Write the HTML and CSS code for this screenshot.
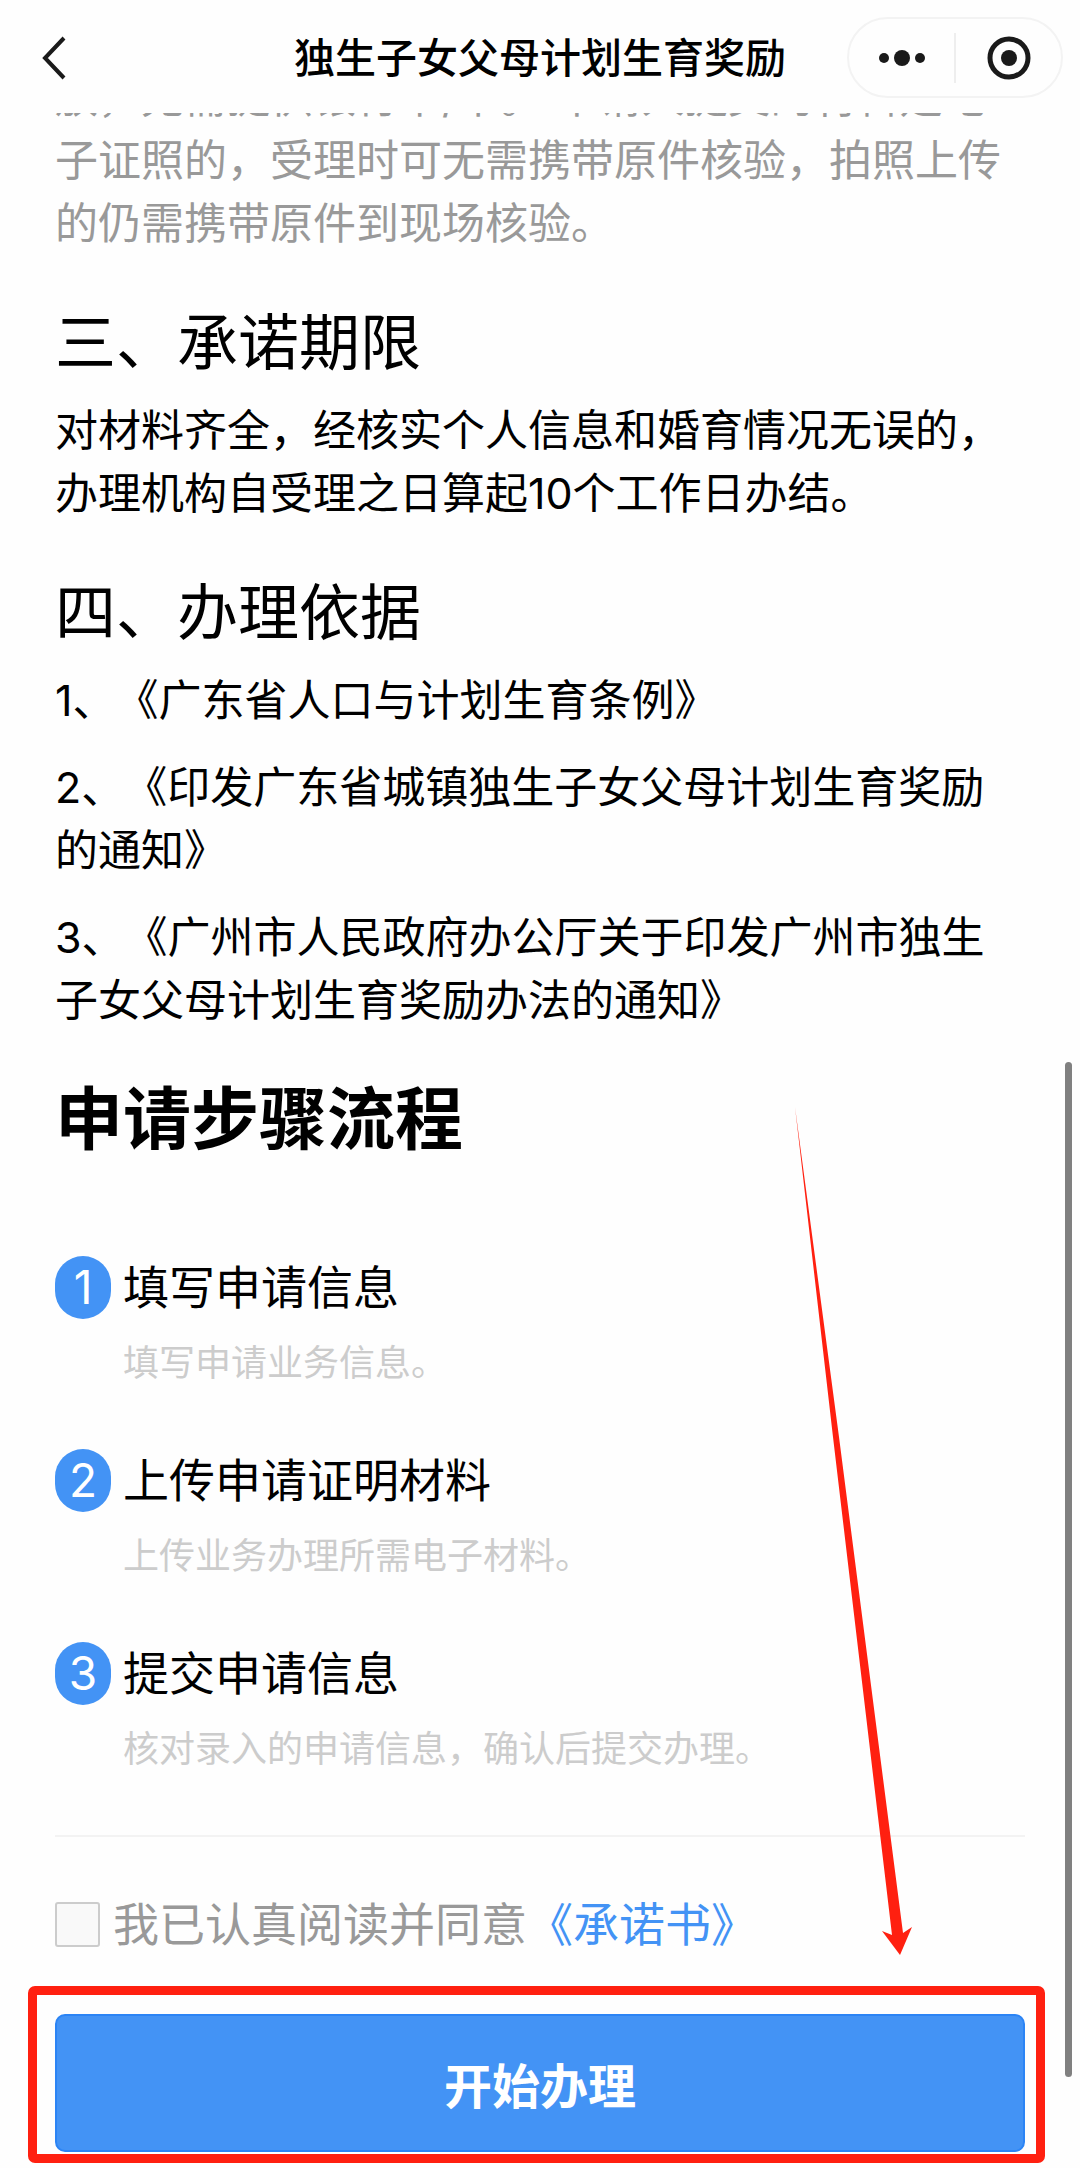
FILE: index.html
```html
<!DOCTYPE html>
<html lang="zh-CN">
<head>
    <meta charset="UTF-8">
    <meta name="viewport" content="width=device-width, initial-scale=1.0">
    <title>独生子女父母计划生育奖励</title>
    <link rel="stylesheet" href="styles.css">
</head>
<body>
    <header class="navbar">
        <button class="back" type="button" aria-label="返回">
            <svg width="24" height="44" viewBox="0 0 24 44" fill="none" stroke="#1a1a1a" stroke-width="4">
                <path d="M22 2L3 22L22 42"/>
            </svg>
        </button>
        <h1 class="navbar-title">独生子女父母计划生育奖励</h1>
        <div class="capsule">
            <button type="button" aria-label="更多">
                <svg width="48" height="44" viewBox="0 0 48 44" fill="#1a1a1a">
                    <circle cx="6" cy="22" r="5"/>
                    <circle cx="24" cy="22" r="8"/>
                    <circle cx="42" cy="22" r="5"/>
                </svg>
            </button>
            <span class="capsule-line"></span>
            <button type="button" aria-label="关闭">
                <svg width="44" height="44" viewBox="0 0 44 44">
                    <circle cx="22" cy="22" r="19" fill="none" stroke="#1a1a1a" stroke-width="5"/>
                    <circle cx="22" cy="22" r="8" fill="#1a1a1a"/>
                </svg>
            </button>
        </div>
    </header>

    <main class="content">
        <p class="note">放，无需提供银行卡/卡。 申请人提交的材料是电子证照的，受理时可无需携带原件核验，拍照上传的仍需携带原件到现场核验。</p>

        <h2>三、承诺期限</h2>
        <p>对材料齐全，经核实个人信息和婚育情况无误的，办理机构自受理之日算起10个工作日办结。</p>

        <h2>四、办理依据</h2>
        <p>1、《广东省人口与计划生育条例》</p>
        <p>2、《印发广东省城镇独生子女父母计划生育奖励的通知》</p>
        <p>3、《广州市人民政府办公厅关于印发广州市独生子女父母计划生育奖励办法的通知》</p>

        <h2 class="steps-title">申请步骤流程</h2>
        <ol class="steps">
            <li>
                <span class="num">1</span>
                <div>
                    <h3>填写申请信息</h3>
                    <p>填写申请业务信息。</p>
                </div>
            </li>
            <li>
                <span class="num">2</span>
                <div>
                    <h3>上传申请证明材料</h3>
                    <p>上传业务办理所需电子材料。</p>
                </div>
            </li>
            <li>
                <span class="num">3</span>
                <div>
                    <h3>提交申请信息</h3>
                    <p>核对录入的申请信息，确认后提交办理。</p>
                </div>
            </li>
        </ol>

        <div class="agree">
            <input type="checkbox" id="agree">
            <label for="agree">我已认真阅读并同意</label><a href="#">《承诺书》</a>
        </div>
    </main>

    <div class="highlight">
        <button class="start" type="button">开始办理</button>
    </div>

    <!-- arrow pointing at the start button -->
    <svg class="arrow" width="120" height="848" viewBox="0 0 120 848" fill="#ff2010">
        <path d="M5 0L49 330L98 710L113 826L122 820L110 848L92 824L102 828L88 710L43 330Z"/>
    </svg>
    <div class="scrollbar"></div>
</body>
</html>
```

FILE: styles.css
```css
* {
    box-sizing: border-box;
}
body {
    position: relative;
    margin: 0;
    font-family: Inter, "Noto Sans CJK SC", sans-serif;
    font-size: 43px;
    line-height: 63px;
    color: #000;
    background-color: #fefefe;
    text-spacing-trim: space-all;
}
h1, h2, h3, p, ol {
    margin: 0;
    padding: 0;
    font-weight: 400;
}
button {
    padding: 0;
    border: none;
    background: none;
    font-family: inherit;
    cursor: pointer;
}
svg {
    display: block;
    overflow: visible;
}

.navbar {
    display: grid;
    grid-template-columns: 1fr auto 1fr;
    align-items: center;
    height: 113px;
    padding: 2px 17px 0;
}
.back {
    justify-self: start;
    margin-left: 25px;
}
.navbar-title {
    font-size: 41px;
    font-weight: 500;
    line-height: 44px;
}
.capsule {
    justify-self: end;
    display: flex;
    align-items: center;
    width: 216px;
    height: 81px;
    border: 2px solid #f3f3f3;
    border-radius: 41px;
}
.capsule button {
    flex: 1;
    display: flex;
    justify-content: center;
}
.capsule-line {
    width: 2px;
    height: 50px;
    background-color: #eee;
}

/* the first line is scrolled half out of view */
.content {
    overflow: hidden;
    padding: 0 55px;
}
.note {
    margin-top: -47px;
    color: #999;
}
.content h2 {
    margin: 44px 0 12px;
    font-size: 61px;
    line-height: 88px;
}
.content > p + p {
    margin-top: 24px;
}
.content .steps-title {
    margin: 37px 0 87px;
    font-size: 68px;
    font-weight: 700;
    line-height: 100px;
}

.steps {
    list-style: none;
    border-bottom: 2px solid #f3f3f3;
}
.steps li {
    display: flex;
    gap: 12px;
    padding-bottom: 56px;
}
.num {
    width: 56px;
    height: 63px;
    border-radius: 28px;
    background-color: #4393f5;
    color: #fff;
    font-size: 46px;
    text-align: center;
}
.steps h3 {
    font-size: 46px;
}
.steps p {
    margin-top: 14px;
    font-size: 36px;
    line-height: 60px;
    color: #ccc;
}

.agree {
    display: flex;
    align-items: center;
    padding: 56px 0 30px;
    font-size: 46px;
    color: #999;
}
.agree input {
    appearance: none;
    width: 45px;
    height: 45px;
    margin: 0 13px 0 0;
    border: 2px solid #ccc;
    border-radius: 3px;
    background-color: #f9f9f9;
}
.agree a {
    color: #4393f5;
    text-decoration: none;
}

.highlight {
    margin: 0 35px 5px 28px;
    padding: 19px 11px 2px 18px;
    border: 9px solid #ff2010;
    border-radius: 7px;
}
.start {
    display: block;
    width: 100%;
    height: 138px;
    border: 2px solid #2b84f5;
    border-radius: 10px;
    background-color: #4393f5;
    color: #fff;
    font-size: 48px;
    font-weight: 700;
}

.arrow {
    position: absolute;
    right: 170px;
    bottom: 213px;
}
.scrollbar {
    position: absolute;
    right: 8px;
    bottom: 91px;
    width: 7px;
    height: 1015px;
    border-radius: 4px;
    background-color: #808080;
}
```
